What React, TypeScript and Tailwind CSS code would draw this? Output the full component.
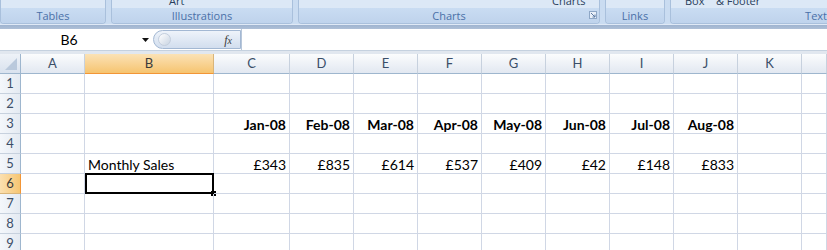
const cols = [
  { key: "A", w: "w-[64px]" },
  { key: "B", w: "w-[129px]" },
  { key: "C", w: "w-[76px]" },
  { key: "D", w: "w-[64px]" },
  { key: "E", w: "w-[64px]" },
  { key: "F", w: "w-[64px]" },
  { key: "G", w: "w-[64px]" },
  { key: "H", w: "w-[64px]" },
  { key: "I", w: "w-[64px]" },
  { key: "J", w: "w-[64px]" },
  { key: "K", w: "w-[64px]" },
  { key: "L", w: "flex-1" },
];

const months = ["Jan-08", "Feb-08", "Mar-08", "Apr-08", "May-08", "Jun-08", "Jul-08", "Aug-08"];
const sales = ["£343", "£835", "£614", "£537", "£409", "£42", "£148", "£833"];
const monthCols = ["C", "D", "E", "F", "G", "H", "I", "J"];

type CellVal = { text: string; bold?: boolean; left?: boolean };

function cellValue(row: number, col: string): CellVal | null {
  const i = monthCols.indexOf(col);
  if (row === 3 && i >= 0) return { text: months[i], bold: true };
  if (row === 5 && col === "B") return { text: "Monthly Sales", left: true };
  if (row === 5 && i >= 0) return { text: sales[i] };
  return null;
}

// top strip of a ribbon group: only the bottom of the button captions shows
const topText = "text-[11px] leading-[2px] text-[#2a3f5c] font-['Open_Sans',sans-serif] whitespace-pre";

function RibbonGroup({ w, label, top, launcher }: { w: string; label: string; top?: React.ReactNode; launcher?: boolean }) {
  return (
    <div className={`${w} flex flex-col border-x border-b border-[#a9c0dc] rounded-b-[4px] overflow-hidden`}>
      <div className="h-[8px] bg-[#dce8f6] overflow-hidden flex items-start">{top}</div>
      <div className="h-[15px] bg-gradient-to-b from-[#c9dcf2] to-[#bfd3ec] relative flex items-center justify-center text-[11px] leading-[15px] text-[#4a70a8] font-['Open_Sans',sans-serif]">
        {label}
        {launcher && (
          <span className="absolute right-[2px] top-[3px] w-[8px] h-[8px] border border-[#8ea7c6] bg-[#e9f0f9]">
            <svg width="6" height="6" viewBox="0 0 6 6" className="block">
              <path d="M1 1 L5 5 M5 2.5 V5 H2.5" stroke="#5d7ba3" strokeWidth="1" fill="none" />
            </svg>
          </span>
        )}
      </div>
    </div>
  );
}

function Ribbon() {
  return (
    <div className="bg-[#c8dbf1]">
      <div className="h-[24px] flex gap-[5px] bg-[#cadcf1]">
        <RibbonGroup w="w-[106px]" label="Tables" />
        <RibbonGroup w="w-[182px]" label="Illustrations" top={<div className={`${topText} pl-[57px]`}>Art</div>} />
        <RibbonGroup w="w-[302px]" label="Charts" launcher top={<div className={`${topText} pl-[253px]`}>Charts</div>} />
        <RibbonGroup w="w-[60px]" label="Links" />
        <div className="flex-1 flex flex-col border-l border-b border-[#a9c0dc] rounded-bl-[4px] overflow-hidden">
          <div className="h-[8px] bg-[#dce8f6] overflow-hidden flex items-start">
            <div className={`${topText} pl-[14px]`}>Box    &amp; Footer</div>
          </div>
          <div className="h-[15px] bg-gradient-to-b from-[#c9dcf2] to-[#bfd3ec] flex items-center justify-end text-[11px] leading-[15px] text-[#4a70a8] font-['Open_Sans',sans-serif]">
            Text
          </div>
        </div>
      </div>
      <div className="h-[1px] bg-[#dfe9f6]" />
      <div className="h-[4px] bg-gradient-to-b from-[#9fb4d0] to-[#aebfd6]" />
    </div>
  );
}

function FormulaBar() {
  return (
    <div className="h-[22px] flex bg-white border-b border-[#c5d1df] font-['Lato',sans-serif]">
      <div className="w-[138px] flex items-center justify-center text-[14px] text-black">B6</div>
      <div className="w-[15px] flex items-center justify-center">
        <svg width="7" height="4" viewBox="0 0 7 4">
          <path d="M0 0 H7 L3.5 4 Z" fill="#111" />
        </svg>
      </div>
      <div className="w-[88px] my-[1px] flex items-center rounded-l-full border border-[#a3b8d3] bg-gradient-to-b from-[#eef3fa] to-[#d2deee]">
        <div className="ml-[4px] w-[13px] h-[13px] rounded-full bg-gradient-to-br from-[#ffffff] to-[#c9d4e2] border border-[#c3cedd]" />
        <div className="flex-1" />
        <span className="mr-[8px] text-[12px] italic text-[#3a3a3a] font-['Liberation_Serif',serif]">
          f<span className="text-[10px]">x</span>
        </span>
      </div>
      <div className="flex-1 border-l border-[#b8c7da] bg-white" />
    </div>
  );
}

function Sheet() {
  const rows = [1, 2, 3, 4, 5, 6, 7, 8, 9];
  return (
    <div className="font-['Lato',sans-serif]">
      <div className="flex h-[20px]">
        <div className="w-[21px] border-r border-b border-[#9eb6ce] bg-gradient-to-b from-[#eef2f8] to-[#d9e2ee] flex items-end justify-end p-[2px]">
          <svg width="14" height="14" viewBox="0 0 14 14">
            <polygon points="13,1 13,13 1,13" fill="#bac9dc" />
          </svg>
        </div>
        {cols.map((c) => (
          <div
            key={c.key}
            className={`${c.w} flex items-center justify-center text-[13px] border-b ${
              c.key === "B"
                ? "bg-gradient-to-b from-[#fbe2b5] to-[#f6c46f] border-r border-r-[#d9b57a] border-b-[#f29536] text-[#3a3a3a]"
                : "bg-gradient-to-b from-[#fbfcfd] to-[#e2e8f1] border-r border-r-[#c7d1de] border-b-[#9eb6ce] text-[#3b4e68]"
            }`}
          >
            {c.key === "L" ? "" : c.key}
          </div>
        ))}
      </div>
      {rows.map((r) => (
        <div key={r} className="flex h-[20px]">
          <div
            className={`w-[21px] flex items-center justify-center text-[13px] border-r border-b ${
              r === 6
                ? "bg-gradient-to-r from-[#fbe0b0] to-[#f6c672] border-r-[#f29536] border-b-[#d9b57a] text-[#3a3a3a]"
                : "bg-gradient-to-r from-[#f4f7fb] to-[#e4eaf2] border-r-[#9eb6ce] border-b-[#c7d1de] text-[#3b4e68]"
            }`}
          >
            {r}
          </div>
          {cols.map((c) => {
            const v = cellValue(r, c.key);
            const selected = r === 6 && c.key === "B";
            return (
              <div
                key={c.key}
                className={`${c.w} relative flex items-center px-[3px] pt-[1px] text-[14px] text-black whitespace-nowrap border-r border-b border-[#d0d7e5] ${
                  v && !v.left ? "justify-end" : "justify-start"
                } ${v?.bold ? "font-bold" : ""}`}
              >
                {v?.text}
                {selected && (
                  <>
                    <div className="absolute left-0 top-[-1px] right-[-1px] bottom-[-1px] border-[2px] border-black" />
                    <div className="absolute right-[-3px] bottom-[-3px] w-[5px] h-[5px] bg-black" />
                  </>
                )}
              </div>
            );
          })}
        </div>
      ))}
    </div>
  );
}

export default function App() {
  return (
    <div className="w-[827px] h-[250px] overflow-hidden bg-white">
      <Ribbon />
      <FormulaBar />
      <div className="h-[3px] bg-[#e1e7ef]" />
      <Sheet />
    </div>
  );
}
